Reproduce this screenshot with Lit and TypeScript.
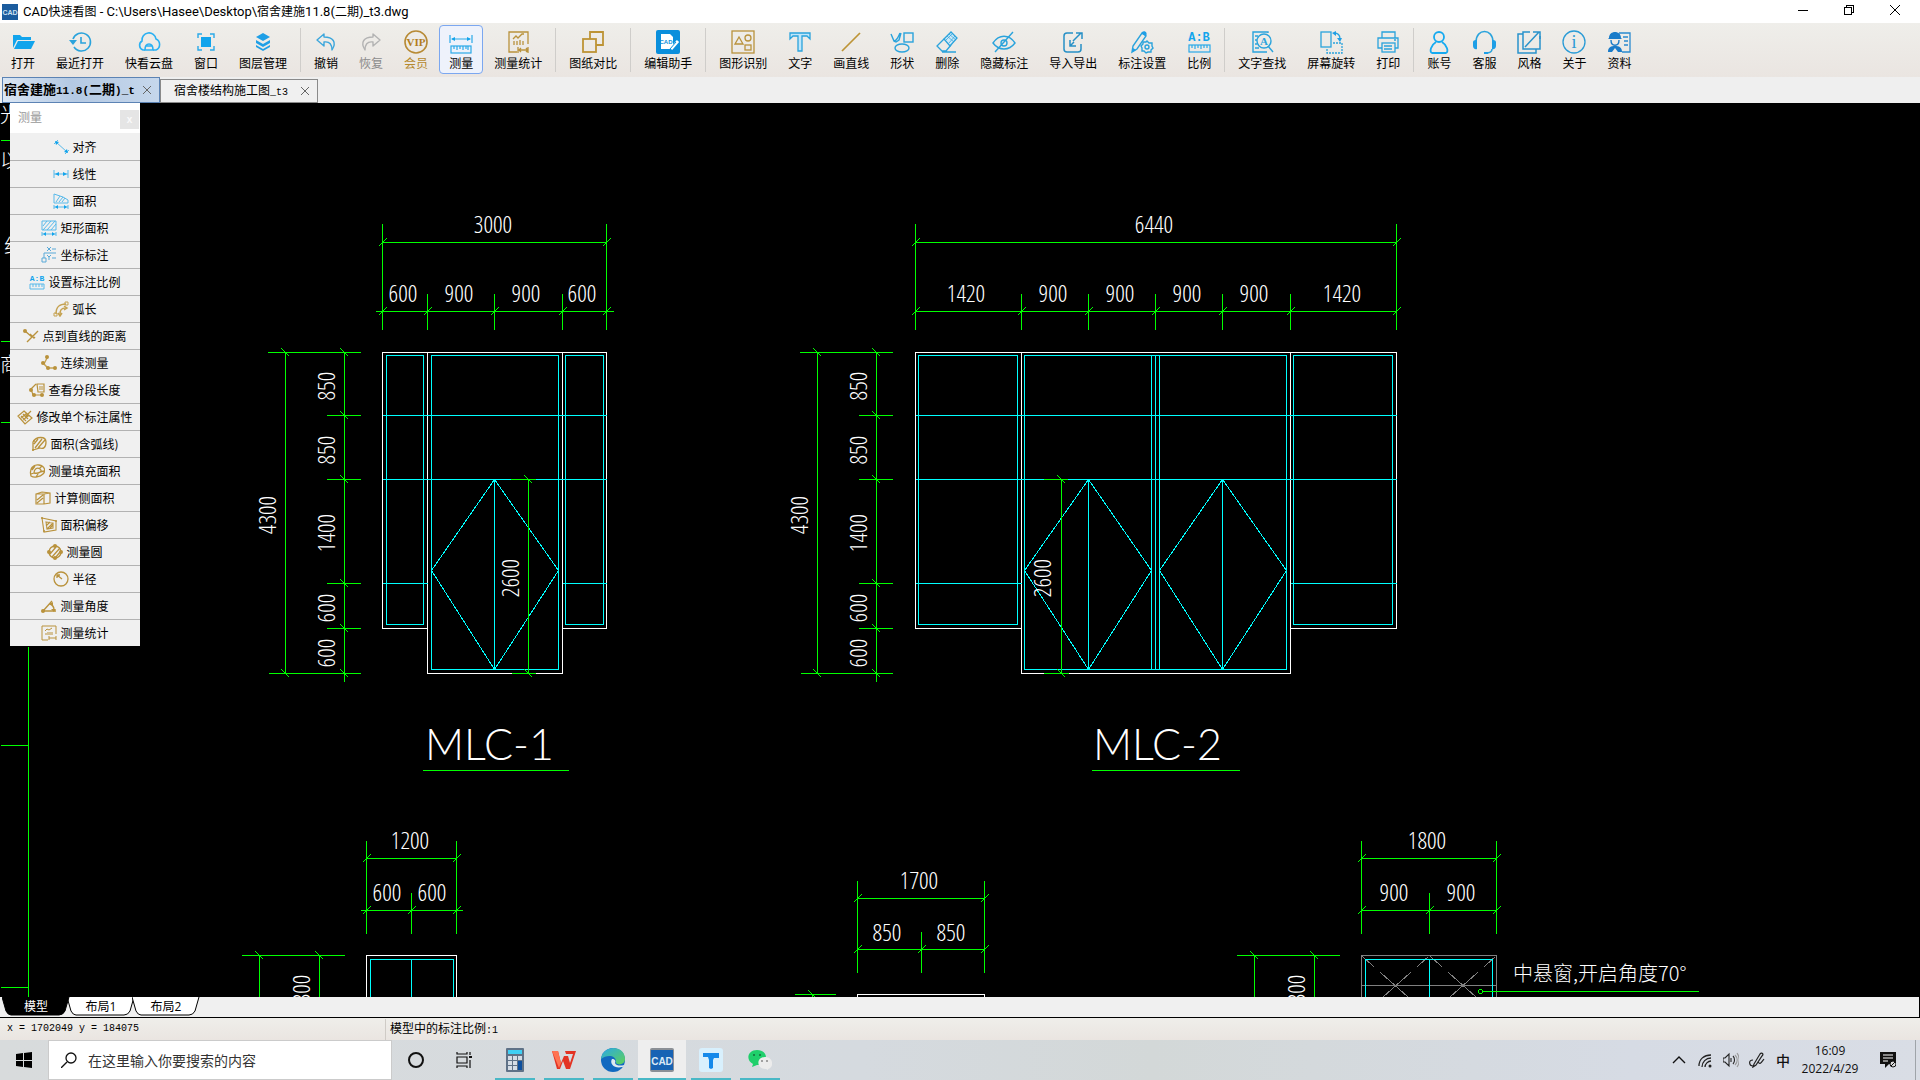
import { LitElement, html, svg, css, type TemplateResult } from "lit";
import { customElement, property, state } from "lit/decorators.js";
import { classMap } from "lit/directives/class-map.js";

type Glyph = TemplateResult;

/* ---------- toolbar glyphs, 24 x 24 ---------- */
const tool: Record<string, Glyph> = {
  open: svg`<path fill="#12a4ec" d="M2 18V5h7l2 2h9v3H6z"/><path fill="#12a4ec" d="M7 11h17l-4 8H3z"/>`,
  recent: svg`<g fill="none" stroke="#2aa3dc" stroke-width="1.6"><path d="M5 9a9 9 0 1 1 1 8"/><path d="M13 7v6h5"/></g><path fill="#2aa3dc" d="M1 10h8l-4 5z"/>`,
  cloud: svg`<g fill="none" stroke="#2bb0f2" stroke-width="1.6"><path d="M8 20H6a5 5 0 0 1-1-9 7 7 0 0 1 14-2 6 6 0 0 1 0 11h-3"/><path d="M8 20c0-8 8-8 8 0zM9 16h6"/></g>`,
  window: svg`<rect x="7" y="7" width="10" height="10" fill="#12a4ec"/><g fill="none" stroke="#2aa9e8" stroke-width="1.4"><path d="M4 8V4h4M16 4h4v4M20 16v4h-4M8 20H4v-4"/></g>`,
  layers: svg`<g fill="#1f9fe6"><path d="M12 3l7 4-7 4-7-4z"/><path d="M5 10l7 4 7-4v3l-7 4-7-4z"/><path d="M5 15l7 4 7-4v2l-7 4-7-4z"/></g>`,
  undo: svg`<path fill="none" stroke="#3ba6dc" stroke-width="1.4" stroke-linejoin="round" d="M10 4L3 10l7 6v-4c6-1 8 3 8 8 5-8 1-13-8-13z"/>`,
  redo: svg`<path fill="none" stroke="#b3b3b3" stroke-width="1.4" stroke-linejoin="round" d="M14 4l7 6-7 6v-4c-6-1-8 3-8 8-5-8-1-13 8-13z"/>`,
  vip: svg`<circle cx="12" cy="12" r="11" fill="none" stroke="#b78a35" stroke-width="1.6"/><text x="12" y="16" text-anchor="middle" font-family="Liberation Serif, serif" font-weight="700" font-size="11" fill="#b27d1d">VIP</text>`,
  measure: svg`<g fill="none" stroke="#2aa9e8" stroke-width="1.2"><path d="M1 5v8M23 5v8M3 9h18"/><rect x="2" y="16" width="20" height="7"/><path d="M5 16v3M8 16v4M11 16v3M14 16v4M17 16v3M19 16v4"/></g><path fill="#12a4ec" d="M2 9l4-2v4zM22 9l-4-2v4z"/>`,
  stats: svg`<g fill="none" stroke="#b9923c" stroke-width="1.3"><path d="M11 22H3V2h19v12"/><path d="M7 9l3-3 2 2 4-4h2M8 15v-4M11 15v-4M14 15v-5M17 15v-4M12 17v6M22 17v6M13 20h9M15 18l-2 2 2 2M20 18l2 2-2 2"/></g>`,
  compare: svg`<g fill="none" stroke="#bd9436" stroke-width="1.8"><path d="M9 9V2h13v13h-7"/><rect x="2" y="9" width="13" height="13"/></g>`,
  assistant: svg`<rect width="24" height="24" rx="2" fill="#0a8fdc"/><path fill="#fff" d="M5 4h9l3 3v12H5z"/><text x="10" y="14" text-anchor="middle" font-family="Liberation Sans, sans-serif" font-weight="700" font-size="6" fill="#0a8fdc">CAD</text><path stroke="#fff" stroke-width="3" d="M22 11l-7 8"/><path stroke="#0a8fdc" stroke-width="1" d="M20 12l-6 7"/>`,
  detect: svg`<g fill="none" stroke="#b9923c" stroke-width="1.3"><rect x="1" y="1" width="22" height="22"/><path d="M4 14l4-7 4 7z"/><circle cx="17" cy="8" r="3"/><rect x="14" y="15" width="6" height="5"/></g>`,
  text: svg`<path fill="#bfe6fa" stroke="#2aa3dc" stroke-width="1.3" d="M2 3h20v6l-3-3h-5v15h-4V6H5L2 9z"/>`,
  line: svg`<path stroke="#bd9436" stroke-width="1.7" d="M3 21L21 3"/>`,
  shapes: svg`<g fill="none" stroke="#2aa3dc" stroke-width="1.4"><rect x="14" y="3" width="9" height="9"/><ellipse cx="12" cy="18" rx="7" ry="4"/><path d="M1 4l3 7c2 0 4-3 6-8M4 11l2 1 3-2 2-7"/></g>`,
  erase: svg`<path fill="#cfe9f7" stroke="#2aa3dc" stroke-width="1.3" d="M9 9l7-7 6 6-7 8z"/><path fill="none" stroke="#2aa3dc" stroke-width="1.3" d="M9 9l-7 7 5 5h4l5-6M7 22h14"/><path fill="none" stroke="#2aa3dc" stroke-width=".7" d="M12 6l7 6M11 10l7-7M14 13l6-7M14 4l7 6"/>`,
  hide: svg`<g fill="none" stroke="#2aa3dc" stroke-width="1.4"><path d="M1 13c6-9 16-9 22 0-6 8-16 8-22 0z"/><circle cx="12" cy="13" r="3"/><path d="M3 22L21 2"/></g>`,
  io: svg`<g fill="none" stroke="#2790c6" stroke-width="1.5"><path d="M12 3H6a3 3 0 0 0-3 3v13a3 3 0 0 0 3 3h11a3 3 0 0 0 3-3v-5"/><path d="M20 3l-8 8M15 3h6v6M9 10v6h6M9 16l4-4"/></g>`,
  annot: svg`<g fill="none" stroke="#2aa3dc" stroke-width="1.4"><path d="M12 3l4 3-9 13-5 3 1-6z"/><path fill="#edeae7" d="M17 11l2 2h3v3l1 2-2 2v2h-3l-2 1-2-2h-2v-3l-1-2 2-2v-2h3z"/><circle cx="17" cy="17" r="2"/></g><path fill="#1f9fe6" d="M12 2c3-2 6 1 4 4l-4-2zM2 22l1-4 3 2z"/>`,
  ratio: svg`<text x="12" y="11" text-anchor="middle" font-family="Liberation Mono, monospace" font-weight="700" font-size="12" fill="#12a4ec">A:B</text><g fill="none" stroke="#2aa9e8" stroke-width="1.2"><rect x="2" y="15" width="21" height="7"/><path d="M5 15v3M8 15v4M11 15v3M14 15v4M17 15v3M20 15v3"/></g>`,
  find: svg`<g fill="none" stroke="#2aa3dc" stroke-width="1.4"><path d="M18 3V2H3v20h14M5 6h3M5 10h2M5 14h2M5 18h4"/><circle cx="14" cy="11" r="7"/><path d="M18 16l5 6"/></g><text x="14" y="15" text-anchor="middle" font-family="Liberation Serif, serif" font-weight="700" font-size="11" fill="#2aa3dc">A</text>`,
  rotate: svg`<g fill="none" stroke="#2aa3dc" stroke-width="1.3"><rect x="2" y="2" width="10" height="15"/><path d="M14 13h9v10H8v-5" stroke-dasharray="2 1"/><path d="M15 3c4 0 6 2 6 6"/></g><path fill="#1f9fe6" d="M17 1v5l-4-3zM18 8h5l-2 4z"/>`,
  print: svg`<g fill="none" stroke="#2aa3dc" stroke-width="1.3"><path d="M6 8V2h13v6M6 18H2V8h20v10h-3"/><rect x="6" y="13" width="13" height="9"/><path d="M8 16h8M8 19h8M18 10h2"/></g>`,
  user: svg`<g fill="none" stroke="#15aaf0" stroke-width="1.8"><circle cx="12" cy="7" r="5"/><path d="M9 12c-5 3-7 10-4 11h14c3-1 1-8-4-11"/></g>`,
  service: svg`<path fill="none" stroke="#2aa3dc" stroke-width="1.5" d="M4 12C4-2 21-2 21 12M20 19c0 3-3 4-6 4"/><path fill="#1f9fe6" d="M1 12c0-2 4-3 4-1v8c-2 1-4-1-4-3zM24 12c0-2-4-3-4-1v8c2 1 4-1 4-3zM12 22h4v2h-4z"/>`,
  style: svg`<g fill="none" stroke="#2a93cb" stroke-width="1.5"><path d="M6 4H1v19h18v-4"/><path d="M13 2H6v17h17V6"/><path d="M8 17L22 2M16 2h7v7"/></g>`,
  about: svg`<circle cx="12" cy="12" r="11" fill="none" stroke="#2a9bd6" stroke-width="1.3"/><text x="12" y="18" text-anchor="middle" font-family="Liberation Serif, serif" font-size="18" fill="#2a9bd6">i</text>`,
  docs: svg`<g fill="none" stroke="#2a8ad0" stroke-width="1.3"><path d="M12 3h11v19H15M16 7h5M17 11h4M17 15h4"/></g><path fill="#1b7cc9" d="M2 8c0-8 12-8 12 0l1 1H1zM1 22c0-5 3-6 7-6s7 1 7 6h-4l-3-4-3 4z"/><path fill="none" stroke="#1b7cc9" stroke-width="1.4" d="M4 10c0 7 8 7 8 0"/>`,
};

/* ---------- measure panel glyphs, 16 x 16 ---------- */
const mini: Record<string, Glyph> = {
  align: svg`<g stroke="#58b9ea" fill="none"><path d="M1 5l4-4M12 15l4-4M3 3l11 10"/></g><path fill="#12a4ec" d="M2 2l4 1-3 3zM15 14l-4-1 3-3z"/>`,
  linear: svg`<g stroke="#58b9ea" fill="none"><path d="M1 4v8M15 4v8M1 8h14"/></g><path fill="#12a4ec" d="M2 8l4-2v4zM14 8l-4-2v4z"/>`,
  area: svg`<g stroke="#58b9ea" fill="none"><path d="M1 10V1l9 3 5 3v3zM3 9l4-6M6 9l4-5M9 9l3-4M1 12v4M15 12v4M1 14h14"/></g><path fill="#12a4ec" d="M2 14l3-2v4zM14 14l-3-2v4z"/>`,
  rect: svg`<g stroke="#58b9ea" fill="none"><path d="M1 1h14v9H1zM2 6l4-5M2 10l8-9M6 10l8-9M10 10l5-6M1 12v4M15 12v4M1 14h14"/></g><path fill="#12a4ec" d="M2 14l3-2v4zM14 14l-3-2v4z"/>`,
  coord: svg`<g stroke="#58a9d8" fill="none"><path d="M1 11h4v4H1zM3 11V6h12M6 0l4 4M10 0L6 4M11 2h4M6 8l2 2 2-2M8 10v3M11 11h4"/></g>`,
  ratio: svg`<text x="8" y="7" text-anchor="middle" font-family="Liberation Mono, monospace" font-weight="700" font-size="8" fill="#12a4ec">A:B</text><g stroke="#58b9ea" fill="none"><path d="M1 10h14v5H1zM4 10v3M7 10v3M10 10v3M13 10v3"/></g>`,
  arc: svg`<g stroke="#c5a251" fill="none" stroke-width="1.5"><path d="M3 13C3 5 7 3 13 3M7 14c0-5 1-7 6-7"/><path d="M5 12l2 3 2-3M11 5l3 2-3 2"/></g><path fill="none" stroke="#c5a251" d="M1 12h3v3H1zM12 1h3v3h-3z"/>`,
  point: svg`<g stroke="#b9923c" fill="none" stroke-width="1.4"><path d="M2 3l7 6M4 14L15 3M7 6l4 4 1-1"/></g><circle cx="2" cy="3" r="2" fill="#b9923c"/>`,
  chain: svg`<g stroke="#c5a251" fill="none" stroke-width="1.4"><path d="M6 3L3 9l4 4h7"/></g><g fill="#b9923c"><circle cx="6" cy="2" r="2"/><circle cx="2" cy="8" r="2"/><circle cx="7" cy="13" r="2"/><circle cx="14" cy="13" r="2"/></g>`,
  segment: svg`<g stroke="#b9923c" fill="none" stroke-width="1.2"><path d="M7 2L2 7l2 6h9M8 2h7v8H9zM10 5h4M10 7h4"/></g><g fill="#b9923c"><circle cx="2" cy="8" r="2"/><circle cx="5" cy="13" r="2"/><circle cx="13" cy="13" r="2"/></g>`,
  modify: svg`<g stroke="#b9923c" fill="none"><path d="M7 2l8 7-7 6-7-8zM4 7l5 5M6 5l5 5M4 9l6-5M6 11l6-5M8 8l6-6" stroke-width="1.2"/></g><path fill="#b9923c" d="M8 9l1-3 2 1z"/>`,
  arcarea: svg`<g stroke="#b9923c" fill="none" stroke-width="1.3"><path d="M2 14V6c3-6 13-6 13 0s-3 7-6 6zM4 12l7-9M7 12l7-8M3 8l4-5"/></g><g fill="#b9923c"><circle cx="2" cy="14" r="1"/><circle cx="3" cy="5" r="1"/></g>`,
  fill: svg`<g stroke="#b9923c" fill="none" stroke-width="1.3"><path d="M2 13C0 6 4 1 10 2s7 6 4 9-9 4-12 2zM5 10c0-4 3-6 6-4s-1 5-6 4zM3 7l3-4M10 6l3-3M2 11l3-1M7 14l2-3M11 9l4-1"/></g>`,
  side: svg`<g stroke="#b9923c" fill="none" stroke-width="1.2"><path d="M1 4l6-2 8 1v10l-6 1H1zM1 4h8l6-1M9 4v10M2 10l6-5M2 13l6-5"/></g>`,
  offset: svg`<g stroke="#b9923c" fill="none" stroke-width="1.1"><path d="M1 1l14 3v9L3 15zM5 5l7 1v5l-6 1zM5 9l4-4M6 12l6-6M9 11l3-3"/></g><g fill="#b9923c"><circle cx="1" cy="1" r="1"/><circle cx="15" cy="4" r="1"/><circle cx="3" cy="14" r="1"/></g>`,
  circle: svg`<g stroke="#b9923c" fill="none" stroke-width="1.3"><circle cx="8" cy="8" r="6"/><path d="M3 10l6-7M5 13l8-9M9 13l4-5"/></g><g fill="#b9923c"><circle cx="8" cy="2" r="2"/><circle cx="2" cy="8" r="2"/><circle cx="14" cy="8" r="2"/><circle cx="8" cy="14" r="2"/></g>`,
  radius: svg`<g stroke="#b9923c" fill="none" stroke-width="1.3"><circle cx="8" cy="8" r="7"/><path d="M9 8L4 4M4 7V4h3"/></g>`,
  angle: svg`<g stroke="#b9923c" fill="none" stroke-width="1.4"><path d="M11 3L2 13h13M9 6c3 1 4 3 4 6"/></g><g fill="#b9923c"><circle cx="2" cy="13" r="2"/><path d="M8 6l4-2v4zM10 11h5l-2 3z"/></g>`,
  stats: svg`<g stroke="#b9923c" fill="none"><path d="M7 15H1V1h14v8M4 6l2-2 2 1 3-2M5 10V8M7 10V7M9 10V7M11 10V7M8 11v4M15 11v4M8 13h7"/></g>`,
};

type ToolItem = { label: string; icon: string; tone?: string } | null;
const TOOLS: ToolItem[] = [
  { label: "打开", icon: "open" },
  { label: "最近打开", icon: "recent" },
  { label: "快看云盘", icon: "cloud" },
  { label: "窗口", icon: "window" },
  { label: "图层管理", icon: "layers" },
  null,
  { label: "撤销", icon: "undo" },
  { label: "恢复", icon: "redo", tone: "muted" },
  { label: "会员", icon: "vip", tone: "gold" },
  { label: "测量", icon: "measure" },
  { label: "测量统计", icon: "stats" },
  null,
  { label: "图纸对比", icon: "compare" },
  null,
  { label: "编辑助手", icon: "assistant" },
  null,
  { label: "图形识别", icon: "detect" },
  { label: "文字", icon: "text" },
  { label: "画直线", icon: "line" },
  { label: "形状", icon: "shapes" },
  { label: "删除", icon: "erase" },
  { label: "隐藏标注", icon: "hide" },
  { label: "导入导出", icon: "io" },
  { label: "标注设置", icon: "annot" },
  { label: "比例", icon: "ratio" },
  null,
  { label: "文字查找", icon: "find" },
  { label: "屏幕旋转", icon: "rotate" },
  { label: "打印", icon: "print" },
  null,
  { label: "账号", icon: "user" },
  { label: "客服", icon: "service" },
  { label: "风格", icon: "style" },
  { label: "关于", icon: "about" },
  { label: "资料", icon: "docs" },
];

const MEASURES: [string, string][] = [
  ["align", "对齐"], ["linear", "线性"], ["area", "面积"], ["rect", "矩形面积"],
  ["coord", "坐标标注"], ["ratio", "设置标注比例"], ["arc", "弧长"], ["point", "点到直线的距离"],
  ["chain", "连续测量"], ["segment", "查看分段长度"], ["modify", "修改单个标注属性"],
  ["arcarea", "面积(含弧线)"], ["fill", "测量填充面积"], ["side", "计算侧面积"],
  ["offset", "面积偏移"], ["circle", "测量圆"], ["radius", "半径"], ["angle", "测量角度"],
  ["stats", "测量统计"],
];

/* ---------- top toolbar ---------- */
@customElement("cad-toolbar")
class CadToolbar extends LitElement {
  @state() private active = "测量";

  static styles = css`
    :host { display: flex; height: 54px; padding: 2px 0 3px 1px; box-sizing: border-box;
      background: linear-gradient(#efeeea, #eae5e1); }
    .item { display: flex; flex-direction: column; align-items: center; flex: none;
      margin: 0 1px 0 0; padding: 4px 9px 0; border: 1px solid transparent; border-radius: 4px;
      background: none; color: #000; font: 12px/18px "Noto Sans CJK SC", sans-serif; white-space: nowrap; }
    .item.on { border-color: #7ba7f0; background: #eef2fb; }
    .item.muted { color: #8c8c8c; }
    .item.gold { color: #b5892e; }
    .icon { width: 24px; height: 24px; display: block; }
    .sep { flex: none; width: 1px; margin: 3px 3px 2px 2px; background: #cfcdca; }
  `;

  render() {
    return TOOLS.map((t) =>
      t === null
        ? html`<span class="sep"></span>`
        : html`<button
            class=${classMap({ item: true, on: this.active === t.label, muted: t.tone === "muted", gold: t.tone === "gold" })}
            @click=${() => (this.active = t.label)}>
            <svg class="icon" viewBox="0 0 24 24" aria-hidden="true">${tool[t.icon]}</svg>${t.label}
          </button>`
    );
  }
}

/* ---------- floating measure panel ---------- */
@customElement("measure-panel")
class MeasurePanel extends LitElement {
  static styles = css`
    :host { display: block; background: #f0f0f0; font: 12px/16px "Noto Sans CJK SC", sans-serif; }
    .head { display: flex; justify-content: space-between; height: 30px; background: #fff;
      border-bottom: 1px solid #f0f0f0; }
    .title { padding: 6px 8px; color: #999; }
    .close { width: 19px; height: 19px; margin: 7px 1px; padding: 0; border: 0; background: #e5e5e5;
      color: #fafafa; font: bold 10px/16px "Liberation Sans", sans-serif; }
    .row { display: flex; align-items: center; justify-content: center; gap: 3px; width: 100%; height: 27px;
      box-sizing: border-box; padding: 0; border: 0; border-bottom: 1px solid #b2b2b2;
      background: #f0f0f0; color: #000; font: inherit; white-space: nowrap; }
    .row:last-child { height: 26px; border-color: #f0f0f0; }
    .icon { width: 16px; height: 16px; flex: none; }
  `;

  render() {
    return html`
      <div class="head"><span class="title">测量</span><button class="close" aria-label="关闭">x</button></div>
      ${MEASURES.map(([icon, label]) => html`<button class="row">
        <svg class="icon" viewBox="0 0 16 16" aria-hidden="true">${mini[icon]}</svg>${label}
      </button>`)}
    `;
  }
}

/* ---------- drawing helpers ---------- */
const slash = (x: number, y: number) => `M${x - 4} ${y + 4}L${x + 4} ${y - 4}`;
const backslash = (x: number, y: number) => `M${x - 4} ${y - 4}L${x + 4} ${y + 4}`;
const box = (x1: number, y1: number, x2: number, y2: number) => `M${x1} ${y1}H${x2}V${y2}H${x1}Z`;

/** Horizontal dimension chain: overall line above, split line below. */
function chain(xs: number[], yTop: number, yRow: number, extTop: number, midTop: number, extBottom: number, over: number) {
  const a = xs[0];
  const b = xs[xs.length - 1];
  return [
    `M${a} ${extTop}V${extBottom}M${b} ${extTop}V${extBottom}`,
    `M${a} ${yTop}H${b}M${a - over} ${yRow}H${b + over}`,
    slash(a, yTop), slash(b, yTop),
    ...xs.map((x) => slash(x, yRow)),
    ...xs.slice(1, -1).map((x) => `M${x} ${midTop}V${extBottom}`),
  ].join("");
}

/** Vertical dimension chain left of a door elevation. */
function sideChain(outer: number, inner: number) {
  return [
    `M${outer - 18} 352H${inner + 16}M${outer - 17} 673H${inner + 16}`,
    `M${outer} 352V673M${inner} 352V681`,
    ...[415, 479, 583, 628].map((y) => `M${inner - 18} ${y}H${inner + 16}` + backslash(inner, y)),
    backslash(outer, 352), backslash(inner, 352), backslash(outer, 673), backslash(inner, 673),
  ].join("");
}

const leaf = (l: number, c: number, r: number) => `M${c} 479V669M${c} 479L${r} 570L${c} 669L${l} 570Z`;
const label = (x: number, y: number, s: string) => svg`<text x=${x} y=${y} text-anchor="middle">${s}</text>`;
const upright = (x: number, y: number, s: string) =>
  svg`<text text-anchor="middle" transform="translate(${x} ${y}) rotate(-90)">${s}</text>`;

const GREEN_PATH = [
  chain([382, 427, 494, 562, 606], 242, 311, 223, 293, 329, 7),
  sideChain(285, 344),
  "M528 479V673M510 479H535M511 673H535", backslash(528, 479), backslash(528, 673),
  "M422 770H568",
  chain([915, 1021, 1088, 1155, 1222, 1290, 1396], 242, 311, 223, 293, 329, 0),
  sideChain(817, 876),
  "M1061 479V673M1043 479H1067M1043 673H1068", backslash(1061, 479), backslash(1061, 673),
  "M1091 770H1239",
  chain([366, 411, 456], 858, 910, 840, 892, 933, 6),
  "M241 955H344M259 955V997M319 955V997", backslash(259, 955), backslash(319, 955),
  chain([857, 921, 984], 898, 949, 880, 931, 972, 0),
  "M794 994H835M812 994V997", backslash(812, 994),
  chain([1361, 1429, 1496], 858, 910, 840, 892, 933, 0),
  "M1236 955H1339M1254 955V997M1314 955V997", backslash(1254, 955), backslash(1314, 955),
  "M1482 991H1698",
  "M28 646V997M0 745H28M0 987H28M0 140H12M0 341H12M0 422H12",
].join("");

const WHITE_PATH = [
  "M382 352H606V628H562V673H427V628H382ZM427 352V628M562 352V628",
  "M915 352H1396V628H1290V673H1021V628H915ZM1021 352V628M1290 352V628",
  "M366 997V955H456V997M857 997V994H984V997",
].join("");

const CYAN_PATH = [
  box(386, 355, 423, 624), box(431, 355, 558, 669), box(565, 355, 603, 624),
  "M382 415H606M382 479H606M382 583H427M562 583H606", leaf(431, 494, 558),
  box(918, 355, 1017, 624), box(1024, 355, 1286, 669), box(1293, 355, 1392, 624),
  "M1151 355V669M1155 355V669M1159 355V669",
  "M915 415H1396M915 479H1396M915 583H1021M1290 583H1396",
  leaf(1024, 1088, 1151), leaf(1159, 1222, 1286),
  "M370 997V959H453V997M411 959V997M1365 997V959H1492V997M1429 959V997",
].join("");

@customElement("cad-drawing")
class CadDrawing extends LitElement {
  static styles = css`
    :host { display: block; background: #000; overflow: hidden; }
    .sheet { display: block; width: 100%; height: 100%; }
    .lines { fill: none; shape-rendering: crispEdges; }
    .green { stroke: #0f0; }
    .white { stroke: #fff; }
    .cyan { stroke: #0ff; }
    .gray { stroke: #808080; }
    .dash { stroke: #808080; stroke-dasharray: 16 8 60 8; }
    .dims { fill: #fff; font: 300 24px "Open Sans Condensed Light", Lato, sans-serif; }
    .names { fill: #fff; font: 300 43px Lato, "Liberation Sans", sans-serif; }
    .notes { fill: #fff; font: 300 20px "Noto Sans CJK SC", sans-serif; }
  `;

  render() {
    return html`<svg class="sheet" viewBox="0 103 1920 894" preserveAspectRatio="xMinYMin slice" role="img" aria-label="图纸">
      <g class="lines" transform="translate(.5 .5)">
        <path class="white" d=${WHITE_PATH}></path>
        <path class="gray" d="M1361 997V955H1496V997M1361 985H1496"></path>
        <path class="dash" d="M1362 956L1408 997"></path><path class="dash" d="M1428 956L1382 997"></path>
        <path class="dash" d="M1430 956L1476 997"></path><path class="dash" d="M1495 956L1449 997"></path>
        <path class="cyan" d=${CYAN_PATH}></path>
        <path class="green" d=${GREEN_PATH}></path>
        <circle class="green" cx="1480" cy="991" r="2"></circle>
      </g>
      <g class="dims">
        ${label(493, 233, "3000")}${label(403, 302, "600")}${label(459, 302, "900")}${label(526, 302, "900")}${label(582, 302, "600")}
        ${upright(335, 386, "850")}${upright(335, 450, "850")}${upright(335, 533, "1400")}${upright(335, 608, "600")}${upright(335, 653, "600")}
        ${upright(276, 515, "4300")}${upright(519, 578, "2600")}
        ${label(1154, 233, "6440")}${label(966, 302, "1420")}${label(1053, 302, "900")}${label(1120, 302, "900")}
        ${label(1187, 302, "900")}${label(1254, 302, "900")}${label(1342, 302, "1420")}
        ${upright(867, 386, "850")}${upright(867, 450, "850")}${upright(867, 533, "1400")}${upright(867, 608, "600")}${upright(867, 653, "600")}
        ${upright(808, 515, "4300")}${upright(1051, 578, "2600")}
        ${label(410, 849, "1200")}${label(387, 901, "600")}${label(432, 901, "600")}
        ${label(919, 889, "1700")}${label(887, 941, "850")}${label(951, 941, "850")}
        ${label(1427, 849, "1800")}${label(1394, 901, "900")}${label(1461, 901, "900")}
        ${upright(310, 989, "800")}${upright(1305, 989, "800")}
      </g>
      <g class="names">
        <text x="425" y="760">MLC-1</text>
        <text x="1093" y="760">MLC-2</text>
      </g>
      <g class="notes">
        <text x="1513" y="981">中悬窗,开启角度70°</text>
        <text x="0" y="122">光</text><text x="0" y="168">以</text><text x="4" y="254">约</text><text x="0" y="372">商</text>
      </g>
    </svg>`;
  }
}

/* ---------- taskbar ---------- */
const apps: { name: string; art: Glyph; active?: boolean }[] = [
  { name: "计算器", art: svg`<rect x="3" width="18" height="24" rx="1" fill="#5f7287"/><rect x="5" y="2" width="14" height="4" fill="#3fd0f5"/><g fill="#d5dde6"><path d="M5 8h4v4H5zM10 8h4v4h-4zM15 8h4v4h-4zM5 13h4v4H5zM10 13h4v4h-4zM5 18h4v4H5zM10 18h4v4h-4z"/></g><path fill="#0d4f9e" d="M15 13h4v9h-4z"/>` },
  { name: "WPS", art: svg`<path fill="#e33323" d="M0 3h6l3 12 3-7h4l2 7 3-9h-7l-1-3h11l-6 18h-4l-3-8-3 8H5z"/><path fill="#ff7352" d="M0 3h6l3 12-2 5z"/>` },
  { name: "Edge", art: svg`<defs><linearGradient id="e" x1="0" y1="0" x2="1" y2="1"><stop offset="0" stop-color="#2aa8e8"/><stop offset="1" stop-color="#5fd256"/></linearGradient></defs><circle cx="12" cy="12" r="12" fill="#1269c0"/><path fill="url(#e)" d="M0 11C2-4 24-3 24 11c0 5-6 7-9 4 1-8-9-9-15-4z"/><path fill="#dfe9ef" d="M11 11c-3 5 3 10 10 8 2 0 2-2 2-2-3 1-8 1-9-2 1-2 0-4-3-4z"/>` },
  { name: "CAD快速看图", active: true, art: svg`<rect width="24" height="24" rx="2" fill="#8b9096"/><rect x="1" y="2" width="22" height="20" fill="#1763b4"/><text x="12" y="17" text-anchor="middle" font-family="Liberation Sans, sans-serif" font-weight="700" font-size="10" fill="#dbe9f5">CAD</text>` },
  { name: "T", art: svg`<rect width="24" height="24" rx="3" fill="#d8f0fd"/><path fill="#1589ea" d="M4 5h16v5h-5l-1 2v8l-2 1-2-1v-8L9 9H4z"/>` },
  { name: "微信", art: svg`<path fill="#1fcf6b" d="M9 2c12 0 12 15 0 15l-5 2 1-3C-3 12 0 2 9 2z"/><g fill="#146b3a"><circle cx="6" cy="7" r="1"/><circle cx="12" cy="7" r="1"/></g><path fill="#ececec" d="M17 9c9 0 9 11 3 12v1l-2-1c-10 0-10-12-1-12z"/><g fill="#888"><circle cx="14" cy="13" r="1"/><circle cx="19" cy="13" r="1"/></g>` },
];

@customElement("task-bar")
class TaskBar extends LitElement {
  @property() time = "16:09";
  @property() date = "2022/4/29";

  static styles = css`
    :host { display: flex; height: 40px; color: #111;
      background: linear-gradient(90deg, #d8dbdc, #d5dadf 45%, #d3d8d8 60%, #d6dbe4 85%, #d9dde5); }
    .btn { display: grid; place-items: center; flex: none; width: 48px; height: 40px; padding: 0;
      border: 0; background: none; color: inherit; }
    .icon { display: block; width: 24px; height: 24px; }
    .search { display: flex; align-items: center; gap: 11px; width: 344px; box-sizing: border-box;
      padding: 0 12px; background: #fff; border: 1px solid #cbcbcb; }
    .glass { width: 16px; height: 16px; flex: none; }
    .field { flex: 1; min-width: 0; border: 0; outline: 0; padding: 0; background: none; font: 14px/20px "Noto Sans CJK SC", sans-serif; }
    .field::placeholder { color: #333; opacity: 1; }
    .apps { display: flex; gap: 1px; margin-left: 3px; }
    .app { position: relative; }
    .app::after { content: ""; position: absolute; bottom: 0; left: 4px; right: 4px; height: 2px; background: #49b8c6; }
    .app.on { background: #eeeeee; }
    .app.on::after { left: 0; right: 0; }
    .tray { display: flex; align-items: center; margin-left: auto; }
    .tray .small { width: 26px; }
    .mini { display: block; width: 16px; height: 16px; }
    .tray .ime { font: 500 14px/20px "Noto Sans CJK SC", sans-serif; }
    .clock { width: 68px; text-align: center; font: 12px/18px "Open Sans", sans-serif; }
    .show { width: 5px; height: 40px; margin-left: 3px; padding: 0; border: 0; border-left: 1px solid #9fa4a9; background: none; }
  `;

  render() {
    return html`
      <button class="btn" aria-label="开始"><svg class="mini" viewBox="0 0 16 16"><path d="M0 2l7-1v7H0zM8 1l8-1v8H8zM0 9h7v6l-7-1zM8 9h8v7l-8-1z"/></svg></button>
      <label class="search">
        <svg class="glass" viewBox="0 0 16 16" fill="none" stroke="#111" stroke-width="1.3"><circle cx="10" cy="6" r="5"/><path d="M6 10l-6 6"/></svg>
        <input class="field" type="text" aria-label="搜索" placeholder="在这里输入你要搜索的内容" />
      </label>
      <button class="btn" aria-label="Cortana"><svg class="mini" viewBox="0 0 16 16"><circle cx="8" cy="8" r="7" fill="none" stroke="#111" stroke-width="2"/></svg></button>
      <button class="btn" aria-label="任务视图"><svg class="mini" viewBox="0 0 16 16" fill="none" stroke="#111" stroke-width="1.2"><path d="M1 0v2h10V0M1 16v-2h10v2M1 5h10v6H1zM14 0v3M14 8v8"/><path d="M13 5h3" stroke-width="2"/></svg></button>
      <div class="apps">
        ${apps.map((a) => html`<button class=${classMap({ btn: true, app: true, on: !!a.active })} aria-label=${a.name}>
          <svg class="icon" viewBox="0 0 24 24">${a.art}</svg></button>`)}
      </div>
      <div class="tray">
        <button class="btn small" aria-label="隐藏的图标"><svg class="mini" viewBox="0 0 16 16" fill="none" stroke="#111" stroke-width="1.4"><path d="M2 11l6-6 6 6"/></svg></button>
        <button class="btn small" aria-label="网络"><svg class="mini" viewBox="0 0 16 16" fill="none" stroke="#222" stroke-width="1.3"><path d="M2 14C2 7 7 3 14 3M5 15c0-5 4-9 9-9M8 15c0-3 3-6 6-6"/><circle cx="13" cy="14" r="1.5" fill="#222" stroke="none"/></svg></button>
        <button class="btn small" aria-label="音量"><svg class="mini" viewBox="0 0 16 16" fill="none" stroke="#222" stroke-width="1.1"><path d="M0 6h2l4-4v12l-4-4H0zM8 6v4M10 4c2 2 2 6 0 8"/><path stroke="#999" d="M12 3c3 3 3 7 0 10M14 1c3 4 3 10 0 14"/></svg></button>
        <button class="btn small" aria-label="手写笔"><svg class="mini" viewBox="0 0 16 16" fill="none" stroke="#222" stroke-width="1.2"><path d="M5 12l6-10c2-2 4 0 2 2L7 13l-3 2zM4 8c-5 0-4 6 0 6M9 10c2 3 3 1 6-3"/></svg></button>
        <button class="btn small ime">中</button>
        <div class="clock">${this.time}<br />${this.date}</div>
        <button class="btn" aria-label="通知"><svg class="mini" viewBox="0 0 16 16"><path fill="#111" d="M0 0h16v12H9l-4 4v-4H0z"/><path stroke="#fff" d="M3 3h10M3 6h10M3 9h5"/><circle cx="13" cy="12" r="3" fill="#ddd" stroke="#111"/><path stroke="#111" d="M11 14l4-4"/></svg></button>
        <button class="show" aria-label="显示桌面"></button>
      </div>
    `;
  }
}

/* ---------- application window ---------- */
@customElement("app-root")
class AppRoot extends LitElement {
  @state() private doc = 0;
  @state() private layout = 0;

  static styles = css`
    :host { display: flex; flex-direction: column; height: 100vh; overflow: hidden; background: #f0f0f0;
      color: #000; font: 12px/16px "Noto Sans CJK SC", sans-serif; }
    .titlebar { display: flex; align-items: center; height: 23px; padding: 0 2px; background: #fff; }
    .logo { width: 16px; height: 16px; margin-right: 5px; }
    .title { flex: 1; font: 13px/20px Roboto, "Noto Sans CJK SC", sans-serif; }
    .cjk { font: 12px/20px "Noto Sans CJK SC", sans-serif; }
    .win { display: grid; place-items: center; width: 46px; height: 23px; padding: 0 0 3px; border: 0; background: none; }
    .wicon { display: block; width: 10px; height: 10px; fill: none; stroke: #000; shape-rendering: crispEdges; }
    .cross { shape-rendering: auto; }
    .docs { display: flex; height: 26px; padding-left: 2px; background: #efefef; }
    .doc { display: flex; align-items: center; width: 158px; box-sizing: border-box; border: 1px solid #8a8a8a;
      margin-top: 2px; background: #f0f0f0; }
    .doc.on { margin-top: 0; border-color: #5c83b4; font-weight: 700; font-size: 13px;
      background: linear-gradient(75deg, #dbe7f5, #b4c9e3 45%, #c6d7ec); }
    .name { flex: 1; min-width: 0; padding: 0 0 0 13px; border: 0; background: none; font: inherit; text-align: left;
      white-space: nowrap; }
    .doc.on .name { padding-left: 1px; }
    .mono { font-family: "Liberation Mono", monospace; font-size: 10px; }
    .doc.on .mono { font-size: 11px; }
    .shut { flex: none; width: 24px; height: 20px; padding: 0; border: 0; background: none; display: grid; place-items: center; }
    .xicon { width: 8px; height: 8px; stroke: #666; fill: none; }
    .stage { position: relative; flex: 1; min-height: 0; }
    .drawing { width: 100%; height: 100%; }
    .panel { position: absolute; left: 10px; top: 0; width: 130px; }
    .layouts { display: flex; height: 20px; padding-left: 2px; border-bottom: 1px solid #000; border-right: 1px solid #000; }
    .layout { position: relative; width: 68px; height: 20px; margin-right: -3px; padding: 0; border: 0; background: none;
      font: 12px/18px "Open Sans", "Noto Sans CJK SC", sans-serif; }
    .layout.on { color: #fff; z-index: 1; }
    .shape { position: absolute; inset: 0; width: 100%; height: 100%; fill: #fff; stroke: #000; }
    .on .shape { fill: #000; }
    .cap { position: relative; }
    .status { display: flex; align-items: center; height: 22px; background: linear-gradient(#efeeea, #eae5e1); }
    .pos { width: 378px; padding-left: 7px; white-space: pre; line-height: 18px; }
    .scale { border-left: 1px solid #cfcbc6; padding-left: 4px; line-height: 18px; }
  `;

  private docTab(i: number, name: TemplateResult) {
    return html`<div class=${classMap({ doc: true, on: this.doc === i })}>
      <button class="name" @click=${() => (this.doc = i)}>${name}</button>
      <button class="shut" aria-label="关闭标签"><svg class="xicon" viewBox="0 0 8 8"><path d="M0 0l8 8M8 0L0 8"/></svg></button>
    </div>`;
  }

  render() {
    return html`
      <header class="titlebar">
        <svg class="logo" viewBox="0 0 16 16"><rect width="16" height="16" fill="#1b5c9e"/><text x="8" y="11" text-anchor="middle" font-family="Liberation Sans, sans-serif" font-weight="700" font-size="7" fill="#cfe2f2">CAD</text></svg>
        <span class="title">CAD<span class="cjk">快速看图</span> - C:\\Users\\Hasee\\Desktop\\<span class="cjk">宿舍建施</span>11.8(<span class="cjk">二期</span>)_t3.dwg</span>
        <button class="win" aria-label="最小化"><svg class="wicon" viewBox="0 0 10 10"><path d="M0 5.5h10"/></svg></button>
        <button class="win" aria-label="还原"><svg class="wicon" viewBox="0 0 10 10"><path d="M.5 2.5h7v7h-7zM2.5 2.5v-2h7v7h-2"/></svg></button>
        <button class="win" aria-label="关闭"><svg class="wicon cross" viewBox="0 0 10 10"><path d="M0 0l10 10M10 0L0 10"/></svg></button>
      </header>
      <cad-toolbar></cad-toolbar>
      <nav class="docs">
        ${this.docTab(0, html`宿舍建施<span class="mono">11.8(</span>二期<span class="mono">)_t</span>`)}
        ${this.docTab(1, html`宿舍楼结构施工图<span class="mono">_t3</span>`)}
      </nav>
      <main class="stage">
        <cad-drawing class="drawing"></cad-drawing>
        <measure-panel class="panel"></measure-panel>
      </main>
      <nav class="layouts">
        ${["模型", "布局1", "布局2"].map((n, i) => html`<button
          class=${classMap({ layout: true, on: this.layout === i })} @click=${() => (this.layout = i)}>
          <svg class="shape" viewBox="0 0 68 20" preserveAspectRatio="none" aria-hidden="true"><path d="M0 0l4 14q2 4 5 4h48q4 0 6-4l4-14"/></svg>
          <span class="cap">${n}</span></button>`)}
      </nav>
      <footer class="status">
        <span class="pos mono">x = 1702049 y = 184075</span>
        <span class="scale">模型中的标注比例<span class="mono">:1</span></span>
      </footer>
      <task-bar></task-bar>
    `;
  }
}
